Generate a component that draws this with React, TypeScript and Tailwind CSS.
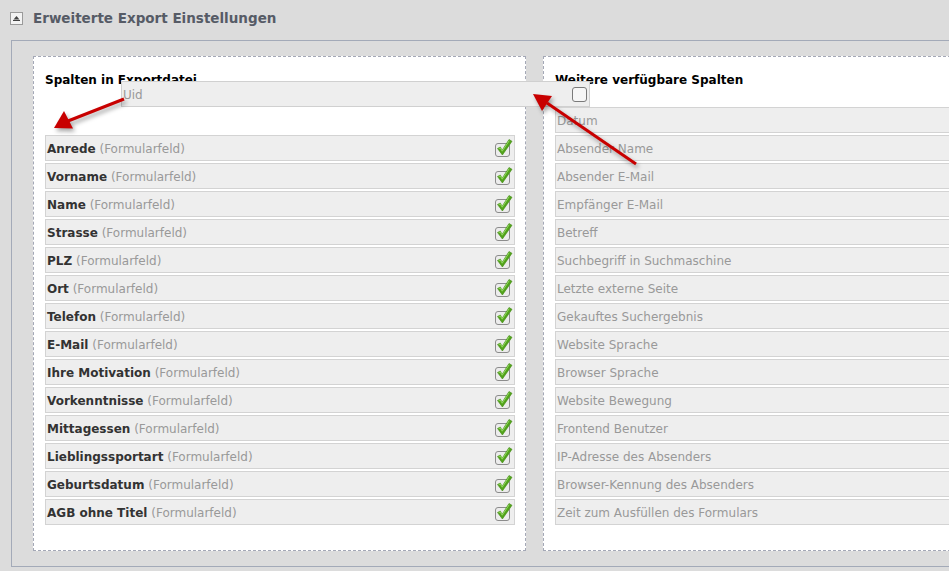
import React from "react";

const LEFT_ROWS = [
  "Anrede",
  "Vorname",
  "Name",
  "Strasse",
  "PLZ",
  "Ort",
  "Telefon",
  "E-Mail",
  "Ihre Motivation",
  "Vorkenntnisse",
  "Mittagessen",
  "Lieblingssportart",
  "Geburtsdatum",
  "AGB ohne Titel",
];

const RIGHT_ROWS = [
  "Datum",
  "Absender Name",
  "Absender E-Mail",
  "Empfänger E-Mail",
  "Betreff",
  "Suchbegriff in Suchmaschine",
  "Letzte externe Seite",
  "Gekauftes Suchergebnis",
  "Website Sprache",
  "Browser Sprache",
  "Website Bewegung",
  "Frontend Benutzer",
  "IP-Adresse des Absenders",
  "Browser-Kennung des Absenders",
  "Zeit zum Ausfüllen des Formulars",
];

function CheckedBox() {
  return (
    <svg width="19" height="20" viewBox="0 0 19 20" className="shrink-0">
      <rect x="1.5" y="5.5" width="14" height="13" rx="2.5" fill="#ececec" stroke="#8c8c8c" />
      <path d="M3.5 10.5 L6.3 9 L8.2 12.3 L15 1.5 L18 3.3 L8.4 17 Z" fill="#52a31b" stroke="#3f8a10" strokeWidth="0.6" strokeLinejoin="round" />
      <path d="M4.6 10.7 L6.3 9.9 L8.2 13.2 L15.2 2.7" fill="none" stroke="#9be06a" strokeWidth="0.9" />
    </svg>
  );
}

function ToggleIcon() {
  return (
    <div className="w-[13px] h-[13px] border border-[#9a9a9a] bg-[#f3f3f3] flex items-center justify-center">
      <svg width="7" height="5" viewBox="0 0 7 5">
        <path d="M3.5 0 L6.5 3.5 L0.5 3.5 Z" fill="#444" />
        <rect x="0" y="4" width="7" height="1" fill="#444" />
      </svg>
    </div>
  );
}

function Arrows() {
  return (
    <svg
      className="absolute inset-0 pointer-events-none"
      width="949"
      height="571"
      viewBox="0 0 949 571"
      style={{ filter: "drop-shadow(2px 3px 2px rgba(0,0,0,0.35))" }}
    >
      <line x1="124" y1="99" x2="68" y2="121" stroke="#c80000" strokeWidth="3" />
      <polygon points="54,128 73,128.5 64,111" fill="#c80000" />
      <line x1="636" y1="164" x2="547" y2="103" stroke="#c80000" strokeWidth="3" />
      <polygon points="533,94 552,96 542,111" fill="#c80000" />
    </svg>
  );
}

function Row({ label, note, checked }: { label: string; note?: string; checked?: boolean }) {
  return (
    <div className="h-[26px] mb-[2px] border border-[#d3d3d3] bg-[#eeeeee] flex items-center justify-between pl-[1px] pr-[1px]">
      <span className="whitespace-nowrap pt-[2px]">
        {note ? (
          <>
            <span className="font-bold text-[#333333]">{label}</span>
            <span className="text-[#999999]"> {note}</span>
          </>
        ) : (
          <span className="text-[#999999]">{label}</span>
        )}
      </span>
      {checked && <CheckedBox />}
    </div>
  );
}

function Panel({ title, children }: { title: string; children: React.ReactNode }) {
  return (
    <div className="w-[493px] h-[495px] shrink-0 bg-white border border-dashed border-[#a4a8b6] pt-[13px] pl-[11px] pr-[10px]">
      <div className="h-[20px] leading-[20px] font-bold text-black mb-[17px]">{title}</div>
      {children}
    </div>
  );
}

export default function App() {
  return (
    <div
      className="relative w-[949px] h-[571px] overflow-hidden bg-[#dcdcdc] text-[12px]"
      style={{ fontFamily: '"DejaVu Sans", Verdana, sans-serif' }}
    >
      <div className="h-[36px] flex items-center gap-[10px] pl-[10px]">
        <ToggleIcon />
        <span className="font-bold text-[13.5px] text-[#565b66]">Erweiterte Export Einstellungen</span>
      </div>

      <div className="mt-[4px] ml-[11px] w-[1100px] border border-[#a3aab8] pt-[15px] pl-[21px] pb-[15px] flex gap-[17px]">
        <Panel title="Spalten in Exportdatei">
          <div className="h-[28px]" />
          {LEFT_ROWS.map((r) => (
            <Row key={r} label={r} note="(Formularfeld)" checked />
          ))}
        </Panel>
        <Panel title="Weitere verfügbare Spalten">
          {RIGHT_ROWS.map((r) => (
            <Row key={r} label={r} />
          ))}
        </Panel>
      </div>

      {/* dragged item */}
      <div className="absolute left-[121px] top-[81px] w-[469px] h-[26px] border border-[#d0d0d0] bg-[#eeeeee] flex items-center justify-between pl-[1px] pr-[2px]">
        <span className="text-[#999999] pt-[2px]">Uid</span>
        <div className="w-[15px] h-[15px] rounded-[3px] border border-[#7a7a7a] bg-[#f6f6f6]" />
      </div>

      <Arrows />
    </div>
  );
}
